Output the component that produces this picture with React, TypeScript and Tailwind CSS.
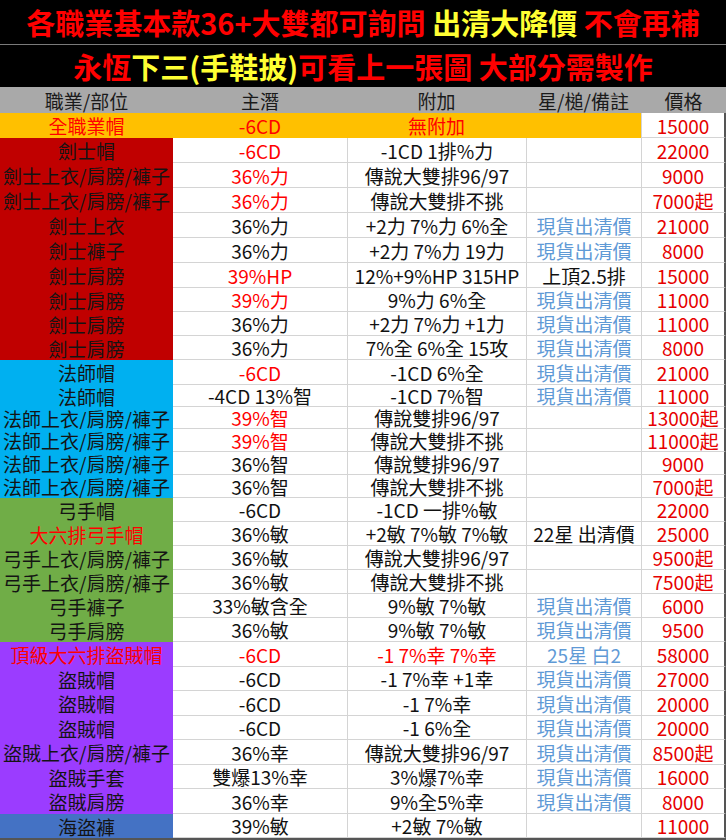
import React from "react";

type Tone = "black" | "red" | "blue";

type Row = {
  job: string;
  jobRed?: boolean;
  main: string;
  mainRed?: boolean;
  add: string;
  addRed?: boolean;
  note?: string;
  noteTone?: Tone;
  price: string;
  bg: string;
  h: string;
  gold?: boolean;
};

const SALE = "現貨出清價";

const rows: Row[] = [
  { job: "全職業帽", jobRed: true, main: "-6CD", mainRed: true, add: "無附加", addRed: true, price: "15000", bg: "bg-[#ffc000]", h: "h-[25px]", gold: true },
  { job: "劍士帽", main: "-6CD", mainRed: true, add: "-1CD 1排%力", price: "22000", bg: "bg-[#c00000]", h: "h-[25px]" },
  { job: "劍士上衣/肩膀/褲子", main: "36%力", mainRed: true, add: "傳說大雙排96/97", price: "9000", bg: "bg-[#c00000]", h: "h-[25px]" },
  { job: "劍士上衣/肩膀/褲子", main: "36%力", mainRed: true, add: "傳說大雙排不挑", price: "7000起", bg: "bg-[#c00000]", h: "h-[25px]" },
  { job: "劍士上衣", main: "36%力", add: "+2力 7%力 6%全", note: SALE, noteTone: "blue", price: "21000", bg: "bg-[#c00000]", h: "h-[25px]" },
  { job: "劍士褲子", main: "36%力", add: "+2力 7%力 19力", note: SALE, noteTone: "blue", price: "8000", bg: "bg-[#c00000]", h: "h-[25px]" },
  { job: "劍士肩膀", main: "39%HP", mainRed: true, add: "12%+9%HP 315HP", note: "上頂2.5排", noteTone: "black", price: "15000", bg: "bg-[#c00000]", h: "h-[25px]" },
  { job: "劍士肩膀", main: "39%力", mainRed: true, add: "9%力 6%全", note: SALE, noteTone: "blue", price: "11000", bg: "bg-[#c00000]", h: "h-[24px]" },
  { job: "劍士肩膀", main: "36%力", add: "+2力 7%力 +1力", note: SALE, noteTone: "blue", price: "11000", bg: "bg-[#c00000]", h: "h-[24px]" },
  { job: "劍士肩膀", main: "36%力", add: "7%全 6%全 15攻", note: SALE, noteTone: "blue", price: "8000", bg: "bg-[#c00000]", h: "h-[24px]" },
  { job: "法師帽", main: "-6CD", mainRed: true, add: "-1CD 6%全", note: SALE, noteTone: "blue", price: "21000", bg: "bg-[#00b0f0]", h: "h-[25px]" },
  { job: "法師帽", main: "-4CD 13%智", add: "-1CD 7%智", note: SALE, noteTone: "blue", price: "11000", bg: "bg-[#00b0f0]", h: "h-[22px]" },
  { job: "法師上衣/肩膀/褲子", main: "39%智", mainRed: true, add: "傳說雙排96/97", price: "13000起", bg: "bg-[#00b0f0]", h: "h-[22px]" },
  { job: "法師上衣/肩膀/褲子", main: "39%智", mainRed: true, add: "傳說大雙排不挑", price: "11000起", bg: "bg-[#00b0f0]", h: "h-[23px]" },
  { job: "法師上衣/肩膀/褲子", main: "36%智", add: "傳說雙排96/97", price: "9000", bg: "bg-[#00b0f0]", h: "h-[23px]" },
  { job: "法師上衣/肩膀/褲子", main: "36%智", add: "傳說大雙排不挑", price: "7000起", bg: "bg-[#00b0f0]", h: "h-[23px]" },
  { job: "弓手帽", main: "-6CD", add: "-1CD 一排%敏", price: "22000", bg: "bg-[#70ad47]", h: "h-[24px]" },
  { job: "大六排弓手帽", jobRed: true, main: "36%敏", add: "+2敏 7%敏 7%敏", note: "22星 出清價", noteTone: "black", price: "25000", bg: "bg-[#70ad47]", h: "h-[24px]" },
  { job: "弓手上衣/肩膀/褲子", main: "36%敏", add: "傳說大雙排96/97", price: "9500起", bg: "bg-[#70ad47]", h: "h-[24px]" },
  { job: "弓手上衣/肩膀/褲子", main: "36%敏", add: "傳說大雙排不挑", price: "7500起", bg: "bg-[#70ad47]", h: "h-[24px]" },
  { job: "弓手褲子", main: "33%敏含全", add: "9%敏 7%敏", note: SALE, noteTone: "blue", price: "6000", bg: "bg-[#70ad47]", h: "h-[24px]" },
  { job: "弓手肩膀", main: "36%敏", add: "9%敏 7%敏", note: SALE, noteTone: "blue", price: "9500", bg: "bg-[#70ad47]", h: "h-[24px]" },
  { job: "頂級大六排盜賊帽", jobRed: true, main: "-6CD", mainRed: true, add: "-1 7%幸 7%幸", addRed: true, note: "25星 白2", noteTone: "blue", price: "58000", bg: "bg-[#9b3cff]", h: "h-[25px]" },
  { job: "盜賊帽", main: "-6CD", add: "-1 7%幸 +1幸", note: SALE, noteTone: "blue", price: "27000", bg: "bg-[#9b3cff]", h: "h-[24px]" },
  { job: "盜賊帽", main: "-6CD", add: "-1 7%幸", note: SALE, noteTone: "blue", price: "20000", bg: "bg-[#9b3cff]", h: "h-[25px]" },
  { job: "盜賊帽", main: "-6CD", add: "-1 6%全", note: SALE, noteTone: "blue", price: "20000", bg: "bg-[#9b3cff]", h: "h-[24px]" },
  { job: "盜賊上衣/肩膀/褲子", main: "36%幸", add: "傳說大雙排96/97", note: SALE, noteTone: "blue", price: "8500起", bg: "bg-[#9b3cff]", h: "h-[25px]" },
  { job: "盜賊手套", main: "雙爆13%幸", add: "3%爆7%幸", note: SALE, noteTone: "blue", price: "16000", bg: "bg-[#9b3cff]", h: "h-[24px]" },
  { job: "盜賊肩膀", main: "36%幸", add: "9%全5%幸", note: SALE, noteTone: "blue", price: "8000", bg: "bg-[#9b3cff]", h: "h-[25px]" },
  { job: "海盜褲", main: "39%敏", add: "+2敏 7%敏", price: "11000", bg: "bg-[#4472c4]", h: "h-[24px]" },
];

const toneClass: Record<Tone, string> = {
  black: "text-[#111]",
  red: "text-[#e60000]",
  blue: "text-[#5f9ad6]",
};

function Cell({ children, className = "" }: { children?: React.ReactNode; className?: string }) {
  return (
    <div className={`flex items-center justify-center whitespace-nowrap leading-none ${className}`}>
      {children}
    </div>
  );
}

export default function App() {
  return (
    <div className="w-[726px] h-[840px] bg-white font-['Noto_Sans_CJK_TC','Liberation_Sans',sans-serif] overflow-hidden">
      {/* Banners */}
      <div className="h-[44px] bg-black flex items-center justify-center text-[29px] font-bold text-[#ff0000] whitespace-nowrap leading-none">
        各職業基本款36+大雙都可詢問&nbsp;<span className="text-[#ffff33]">出清大降價</span>&nbsp;不會再補
      </div>
      <div className="h-px bg-[#7a7a7a]" />
      <div className="h-[42px] bg-black flex items-center justify-center text-[29px] font-bold text-[#ff0000] whitespace-nowrap leading-none">
        永恆<span className="text-[#ffff33]">下三(手鞋披)</span>可看上一張圖&nbsp;大部分需製作
      </div>

      {/* Header */}
      <div className="h-[26px] grid grid-cols-[173px_174px_179px_115px_85px] bg-[#a9a9a9] text-[19px] text-[#1a1a1a]">
        <Cell>職業/部位</Cell>
        <Cell>主潛</Cell>
        <Cell>附加</Cell>
        <Cell>星/槌/備註</Cell>
        <Cell>價格</Cell>
      </div>

      {/* Rows */}
      <div className="flex flex-col border-b-2 border-[#555]">
        {rows.map((r, i) => (
          <div key={i} className={`${r.h} grid grid-cols-[173px_174px_179px_115px_85px] text-[19px]`}>
            <Cell className={`${r.bg} ${r.jobRed ? "text-[#ff0000]" : "text-[#141414]"}`}>{r.job}</Cell>
            <Cell
              className={`${r.gold ? "bg-[#ffc000]" : "bg-white border-b border-[#d4d4d4]"} ${r.mainRed ? "text-[#ff0000]" : "text-[#111]"}`}
            >
              {r.main}
            </Cell>
            <Cell
              className={`${r.gold ? "bg-[#ffc000]" : "bg-white border-b border-l border-[#d4d4d4]"} ${r.addRed ? "text-[#ff0000]" : "text-[#111]"}`}
            >
              {r.add}
            </Cell>
            <Cell
              className={`${r.gold ? "bg-[#ffc000]" : "bg-white border-b border-l border-[#d4d4d4]"} ${toneClass[r.noteTone ?? "black"]}`}
            >
              {r.note}
            </Cell>
            <Cell className="bg-white border-b border-l border-r-2 border-l-[#d4d4d4] border-b-[#d4d4d4] border-r-[#555] text-[#e60000]">
              {r.price}
            </Cell>
          </div>
        ))}
      </div>
    </div>
  );
}
